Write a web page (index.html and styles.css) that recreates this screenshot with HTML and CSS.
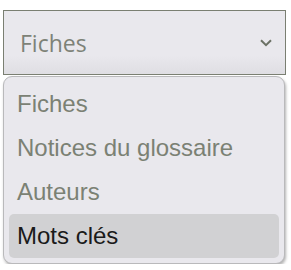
FILE: index.html
```html
<!DOCTYPE html>
<html lang="fr">
<head>
    <meta charset="UTF-8">
    <meta name="viewport" content="width=device-width, initial-scale=1.0">
    <title>Recherche</title>
    <link rel="stylesheet" href="styles.css">
</head>
<body>
    <div class="picker">
        <div class="select-box">
            <span class="select-value">Fiches</span>
            <svg class="chevron" viewBox="0 0 12 8" width="12" height="8">
                <path d="M1 1.2 L6 6.2 L11 1.2" fill="none" stroke="#6b7165" stroke-width="2" />
            </svg>
        </div>
        <ul class="options">
            <li class="option">Fiches</li>
            <li class="option">Notices du glossaire</li>
            <li class="option">Auteurs</li>
            <li class="option active">Mots clés</li>
        </ul>
    </div>
</body>
</html>
```

FILE: styles.css
```css
body {
    margin: 0;
    background: #fff;
    font-family: "Liberation Sans", Arial, sans-serif;
}

.picker {
    padding: 10px 0 0 3px;
}

.select-box {
    width: 283px;
    height: 65px;
    box-sizing: border-box;
    border: 1px solid #7a7f72;
    background: linear-gradient(to bottom, #e9e8ed 70%, #dfdee3 100%);
    display: flex;
    align-items: center;
    justify-content: space-between;
    padding: 0 13px 0 16px;
}

.select-value {
    font-family: "Open Sans", sans-serif;
    font-size: 23px;
    color: #7d8277;
}

.chevron {
    display: block;
}

.options {
    list-style: none;
    margin: 1px 0 0 0;
    padding: 5px;
    width: 282px;
    box-sizing: border-box;
    background: #e9e8ed;
    border: 1px solid #b9b9bb;
    border-radius: 9px;
    box-shadow: 1px 2px 3px rgba(0, 0, 0, 0.3);
}

.option {
    height: 44px;
    display: flex;
    align-items: center;
    padding-left: 8px;
    font-size: 24px;
    color: #7b8174;
    border-radius: 5px;
}

.option.active {
    background: #d1d1d3;
    color: #1a1a1a;
}
```
